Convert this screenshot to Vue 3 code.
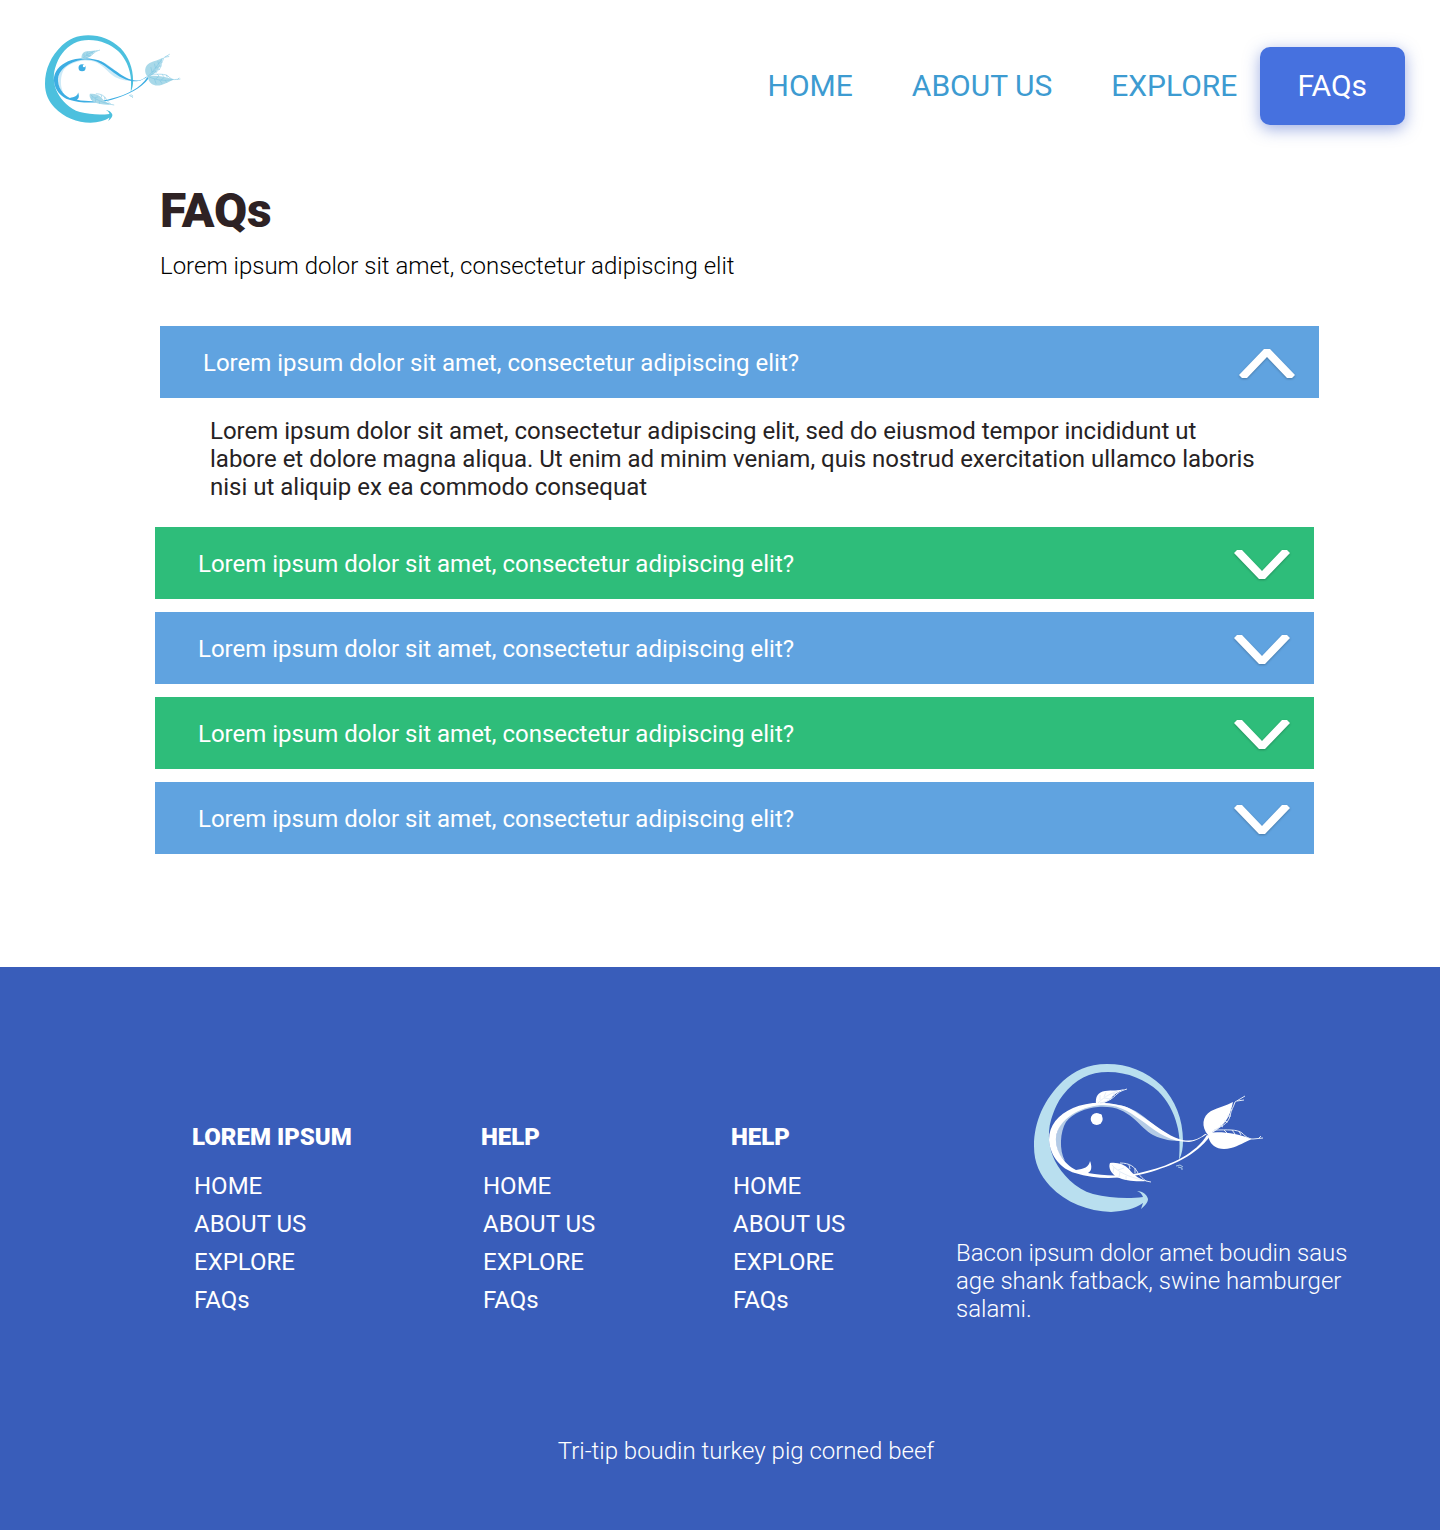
<script setup>
import { ref, h } from 'vue'

const navLinks = ['HOME', 'ABOUT US', 'EXPLORE']

const question = 'Lorem ipsum dolor sit amet, consectetur adipiscing elit?'
const answer =
  'Lorem ipsum dolor sit amet, consectetur adipiscing elit, sed do eiusmod tempor incididunt ut labore et dolore magna aliqua. Ut enim ad minim veniam, quis nostrud exercitation ullamco laboris nisi ut aliquip ex ea commodo consequat'
const items = [1, 2, 3, 4, 5].map((id) => ({ id, question, answer }))
const openId = ref(1)
const toggle = (id) => {
  openId.value = openId.value === id ? null : id
}

const links = ['HOME', 'ABOUT US', 'EXPLORE', 'FAQs']
const columns = [
  { id: 1, title: 'LOREM IPSUM', links },
  { id: 2, title: 'HELP', links },
  { id: 3, title: 'HELP', links },
]

const leaves = [
  'M62 40C61 33 64 28 71 27C78 26 84 27 91 25C86 27 82 29 79 32C76 36 72 38 68 40Z',
  'M76 99C83 98 90 100 95 105C100 112 106 115 113 117C103 118 91 117 83 113C77 110 74 103 76 99Z',
  'M174 71C167 63 168 52 177 47C185 43 192 42 199 38C197 47 195 53 191 58C186 64 180 68 175 71Z',
  'M174 69C188 67 204 70 218 75C210 78 205 82 197 84C190 86 184 85 180 82C176 79 174 74 174 69Z',
]
const outlines = [
  'M66 39C74 38 79 34 83 30C86 27 90 26 93 25M76 36L78 33M80 32L80 29',
  'M86 99C96 99 101 103 104 109C107 113 108 114 112 117L117 118M95 101L96 105M101 104L101 109',
  'M178 68C186 62 194 61 196 52C197 46 200 42 201 38L211 32M203 37L210 36M193 52L197 52M190 57L194 58M186 61L189 63M196 45L198 46',
  'M180 66C193 66 203 65 208 69C212 73 215 75 219 75L229 74M224 75L227 72M198 66L201 70M205 67L207 71M190 66L193 69',
]
const ribs = [
  'M64 39C69 34 75 30 84 27M66 36L66 31M70 33L72 28M70 34L76 35',
  'M78 101C84 108 95 113 108 116M80 103L79 109M86 108L85 113M92 112L92 116M84 106L90 104',
]
const tailRibs = [
  'M174 70C184 60 192 48 199 39M181 63L179 54M187 56L185 48M192 49L191 44M181 63L187 59M187 56L192 53',
  'M175 70C190 77 204 77 216 75M185 74L188 82M194 76L198 82M203 76L206 80M187 74L192 70M196 76L201 72',
]

const FishLogo = () =>
  h('svg', { viewBox: '0 0 230 148', role: 'img', 'aria-label': 'Fish logo' }, [
    h('path', {
      class: 'ring',
      d: 'M145 96C148 90 149 84 149 77C149 55 141 36 128 22C112 7 94 0 73 0C54 0 40 7 29 17C10 35 0 58 0 82C0 99 6 111 16 122C32 139 54 147 77 148C90 147 101 145 109 139L107 145C111 142 114 138 114 135C113 131 109 127 103 127C106 128 108 130 109 133C94 135 75 134 59 130C41 125 28 110 21 97C15 85 13 70 17 56C20 46 24 37 29 31C41 15 56 8 74 8C94 8 112 16 124 27C133 36 140 48 143 61C146 72 146 82 145 96Z',
    }),
    h('path', {
      class: 'shade',
      d: 'M66 40C43 42 26 54 22 72C21 84 25 92 31 97C25 86 26 68 32 58C39 49 52 44 64 43C82 42 90 47 99 54C107 61 112 67 119 71C129 76 138 77 149 77C130 72 118 58 106 50C93 41 80 39 66 40Z',
    }),
    h('path', {
      class: 'body',
      d: 'M171 70C163 77 154 78 145 75C135 72 121 61 106 51C99 46 93 42 84 41C68 37 51 39 39 44C24 51 15 61 15 76C16 92 27 105 41 109C65 117 94 114 113 109C138 102 163 91 176 72L173 71C162 89 138 101 113 107C96 112 75 113 54 109C58 107 58 102 56 97C55 103 50 105 42 106C30 100 21 87 22 73C25 55 45 43 67 41C87 40 98 50 111 59C124 69 137 78 155 78C163 77 168 73 173 70Z',
    }),
    h('circle', { class: 'eye', cx: 62.7, cy: 55, r: 6 }),
    h('circle', { class: 'glint', cx: 66, cy: 52, r: 2 }),
    ...leaves.map((d) => h('path', { class: 'leaf', d })),
    ...outlines.map((d) => h('path', { class: 'outline', d })),
    ...ribs.map((d) => h('path', { class: 'rib', d })),
    ...tailRibs.map((d) => h('path', { class: 'tail-rib', d })),
    h('path', { class: 'mark', d: 'M142 102L146 101L149 103M144 103L148 104L148 106' }),
  ])
</script>

<template>
  <div class="page">
    <header class="top">
      <a href="#" class="brand"><FishLogo class="logo logo-color" /></a>
      <nav class="nav">
        <a v-for="link in navLinks" :key="link" href="#">{{ link }}</a>
        <a href="#" class="current" aria-current="page">FAQs</a>
      </nav>
    </header>

    <main class="content">
      <div class="intro">
        <h1>FAQs</h1>
        <p>Lorem ipsum dolor sit amet, consectetur adipiscing elit</p>
      </div>

      <section class="accordion">
        <div v-for="item in items" :key="item.id" class="item" :class="{ open: openId === item.id }">
          <button
            type="button"
            class="question"
            :aria-expanded="openId === item.id"
            :aria-controls="'answer-' + item.id"
            @click="toggle(item.id)"
          >
            <span>{{ item.question }}</span>
            <svg class="chevron" viewBox="0 0 56 29" aria-hidden="true">
              <path d="M25 0H31L56 26L53 29H48L28 8L8 29H3L0 26Z" />
            </svg>
          </button>
          <p v-if="openId === item.id" :id="'answer-' + item.id" class="answer">{{ item.answer }}</p>
        </div>
      </section>
    </main>

    <footer class="footer">
      <div class="footer-grid">
        <section v-for="column in columns" :key="column.id" class="column">
          <h2>{{ column.title }}</h2>
          <ul>
            <li v-for="link in column.links" :key="link"><a href="#">{{ link }}</a></li>
          </ul>
        </section>
        <section class="about">
          <FishLogo class="logo logo-light" />
          <p>Bacon ipsum dolor amet boudin sausage shank fatback, swine hamburger salami.</p>
        </section>
      </div>
      <p class="tagline">Tri-tip boudin turkey pig corned beef</p>
    </footer>
  </div>
</template>

<style>
body {
  margin: 0;
  background: #fff;
}
</style>

<style scoped>
.page {
  font-family: Roboto, 'Liberation Sans', sans-serif;
  font-size: 24px;
  line-height: 28px;
}

h1,
h2,
p,
ul {
  margin: 0;
  padding: 0;
}

a {
  color: inherit;
  text-decoration: none;
}

.logo {
  display: block;
}

.top {
  display: flex;
  justify-content: space-between;
  align-items: flex-start;
  padding: 35px 35px 0 45px;
}

.logo-color {
  width: 136px;
  height: 88px;
}

.nav {
  display: flex;
  align-items: center;
  gap: 59px;
  margin-top: 12px;
  color: #3d9bd1;
  font-size: 30px;
  line-height: 36px;
}

.current {
  margin-left: -36px;
  padding: 21px 38px 21px 37px;
  border-radius: 10px;
  background: #4671df;
  box-shadow: 0 4px 16px rgba(62, 94, 200, 0.5);
  color: #fff;
}

.content {
  padding: 58px 126px 113px 155px;
}

.intro {
  padding-left: 5px;
}

h1 {
  color: #2e2224;
  font-size: 48px;
  font-weight: 900;
  line-height: 56px;
}

.intro p {
  margin-top: 13px;
  color: #000;
  font-weight: 300;
}

.accordion {
  display: flex;
  flex-direction: column;
  gap: 13px;
  margin-top: 46px;
}

.item.open {
  margin: 0 -5px 0 5px;
}

.question {
  display: flex;
  justify-content: space-between;
  align-items: center;
  width: 100%;
  height: 72px;
  padding: 2px 24px 0 43px;
  border: 0;
  background: #2ebd7a;
  color: #fff;
  font: inherit;
  text-align: left;
  cursor: pointer;
}

.item:nth-child(odd) .question {
  background: #60a3e0;
}

.chevron {
  width: 56px;
  height: 29px;
  fill: #fff;
  transform: rotate(180deg);
  filter: drop-shadow(0 -1px 1px rgba(0, 0, 0, 0.25));
}

.open .chevron {
  transform: none;
  filter: drop-shadow(0 1px 1px rgba(0, 0, 0, 0.25));
}

.answer {
  padding: 19px 60px 13px 50px;
  color: #262223;
}

.footer {
  padding: 97px 0 65px;
  background: #395dba;
  color: #fff;
}

.footer-grid {
  display: grid;
  grid-template-columns: 289fr 250fr 225fr 396fr;
  padding: 0 88px 0 192px;
}

.column {
  padding-top: 59px;
}

h2 {
  font-size: 24px;
  font-weight: 900;
  line-height: 28px;
}

ul {
  margin-top: 16px;
  padding-left: 2px;
  list-style: none;
  line-height: 38px;
}

.logo-light {
  width: 230px;
  height: 148px;
  margin-left: 78px;
}

.about p {
  margin-top: 27px;
  font-weight: 300;
  word-break: break-all;
}

.tagline {
  margin-top: 114px;
  padding-left: 52px;
  font-weight: 300;
  text-align: center;
}

.logo :deep(.outline),
.logo :deep(.rib),
.logo :deep(.tail-rib),
.logo :deep(.mark) {
  fill: none;
  stroke-width: 1;
}

.logo-color :deep(.ring) {
  fill: #4cc0de;
}

.logo-color :deep(.shade) {
  fill: #cdeaf7;
}

.logo-color :deep(.body),
.logo-color :deep(.eye) {
  fill: #3daee3;
}

.logo-color :deep(.glint) {
  fill: #fff;
}

.logo-color :deep(.leaf) {
  fill: #a9d9e9;
}

.logo-color :deep(.outline),
.logo-color :deep(.rib),
.logo-color :deep(.tail-rib),
.logo-color :deep(.mark) {
  stroke: #7cc6e2;
}

.logo-light :deep(.ring) {
  fill: #b9dfef;
}

.logo-light :deep(.shade) {
  fill: #b4cbe6;
}

.logo-light :deep(.body),
.logo-light :deep(.eye),
.logo-light :deep(.glint),
.logo-light :deep(.leaf) {
  fill: #fff;
}

.logo-light :deep(.outline) {
  stroke: #dfe8f6;
}

.logo-light :deep(.rib) {
  stroke: #e6eef8;
}

.logo-light :deep(.tail-rib) {
  stroke: none;
}

.logo-light :deep(.mark) {
  stroke: #a9c8e4;
}
</style>
